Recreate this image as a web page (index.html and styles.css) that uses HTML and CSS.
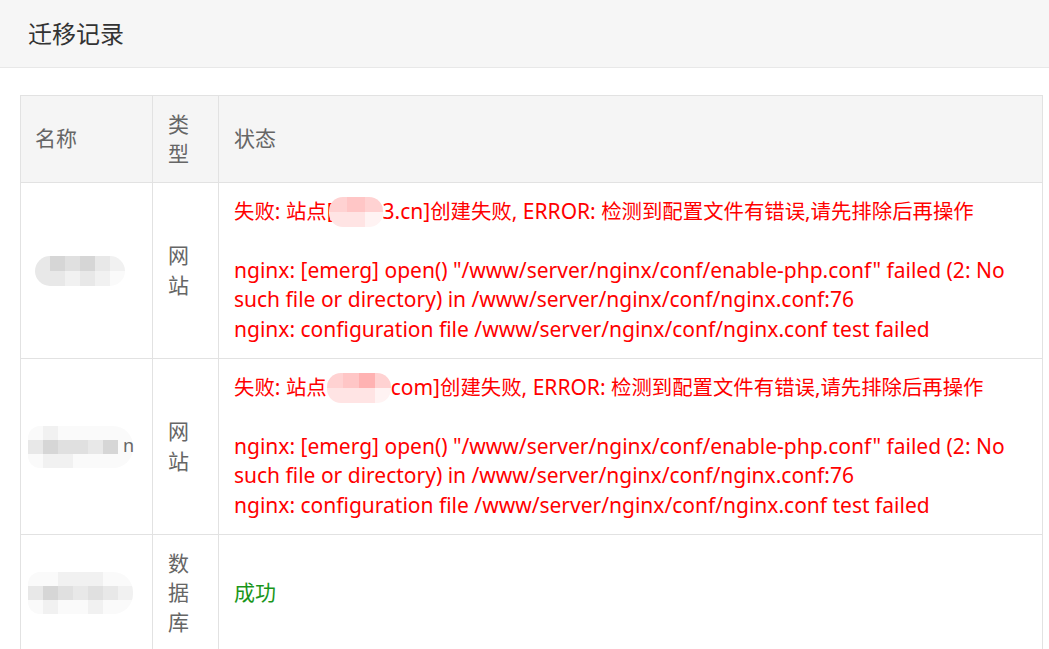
FILE: index.html
```html
<!DOCTYPE html>
<html lang="zh-CN">
<head>
<meta charset="utf-8">
<title>迁移记录</title>
<link rel="stylesheet" href="styles.css">
</head>
<body>
<header class="title-bar">迁移记录</header>
<main class="content">
  <table class="records">
    <colgroup>
      <col class="c-name">
      <col class="c-type">
      <col class="c-status">
    </colgroup>
    <thead>
      <tr><th>名称</th><th>类型</th><th>状态</th></tr>
    </thead>
    <tbody>
      <tr>
        <td class="name">
          <span class="mosaic m1">
            <i class="g2"></i><i class="g4"></i><i class="g3"></i><i class="g4"></i><i class="g2"></i><i class="g1"></i>
            <i class="g2"></i><i class="g2"></i><i class="g1"></i><i class="g2"></i><i class="g1"></i><i class="g0"></i>
          </span>
        </td>
        <td class="type">网站</td>
        <td class="status fail"><span class="zh">失败</span>: <span class="zh">站点</span>[<span class="pink p1"><i class="k2"></i><i class="k3"></i><i class="k2"></i><i class="k1"></i><i class="k1"></i><i class="k0"></i></span>3.cn]<span class="zh">创建失败</span>, ERROR: <span class="zh">检测到配置文件有错误,请先排除后再操作</span><br><br>nginx: [emerg] open() "/www/server/nginx/conf/enable-php.conf" failed (2: No such file or directory) in /www/server/nginx/conf/nginx.conf:76<br>nginx: configuration file /www/server/nginx/conf/nginx.conf test failed</td>
      </tr>
      <tr>
        <td class="name">
          <span class="mosaic m2">
            <i class="g0"></i><i class="g1"></i><i class="g0"></i><i class="g0"></i><i class="g0"></i><i class="g0"></i><i class="g0"></i>
            <i class="g2"></i><i class="g4"></i><i class="g3"></i><i class="g3"></i><i class="g2"></i><i class="g4"></i><i class="g0"></i>
            <i class="g0"></i><i class="g1"></i><i class="g1"></i><i class="g0"></i><i class="g0"></i><i class="g0"></i><i class="g0"></i>
          </span><span class="tail">n</span>
        </td>
        <td class="type">网站</td>
        <td class="status fail"><span class="zh">失败</span>: <span class="zh">站点</span><span class="pink p2"><i class="k2"></i><i class="k3"></i><i class="k4"></i><i class="k2"></i><i class="k1"></i><i class="k1"></i><i class="k1"></i><i class="k0"></i></span>com]<span class="zh">创建失败</span>, ERROR: <span class="zh">检测到配置文件有错误,请先排除后再操作</span><br><br>nginx: [emerg] open() "/www/server/nginx/conf/enable-php.conf" failed (2: No such file or directory) in /www/server/nginx/conf/nginx.conf:76<br>nginx: configuration file /www/server/nginx/conf/nginx.conf test failed</td>
      </tr>
      <tr>
        <td class="name">
          <span class="mosaic m3">
            <i class="g0"></i><i class="g0"></i><i class="g1"></i><i class="g1"></i><i class="g1"></i><i class="g0"></i><i class="g0"></i>
            <i class="g2"></i><i class="g4"></i><i class="g3"></i><i class="g2"></i><i class="g3"></i><i class="g2"></i><i class="g1"></i>
            <i class="g0"></i><i class="g1"></i><i class="g0"></i><i class="g0"></i><i class="g1"></i><i class="g0"></i><i class="g0"></i>
          </span>
        </td>
        <td class="type">数据库</td>
        <td class="status ok">成功</td>
      </tr>
    </tbody>
  </table>
</main>
</body>
</html>
```
FILE: styles.css
```css
html, body {
  margin: 0;
  padding: 0;
  background: #fff;
}
body {
  font-family: "Noto Sans", "Noto Sans CJK SC", sans-serif;
  font-size: 21px;
  color: #666;
}
.title-bar {
  height: 68px;
  box-sizing: border-box;
  background: #f6f6f6;
  border-bottom: 1px solid #e8e8e8;
  padding: 0 28px;
  line-height: 67px;
  font-size: 24px;
  color: #333;
}
.content {
  padding: 27px 6px 0 20px;
}
.records {
  width: 1023px;
  border-collapse: collapse;
  table-layout: fixed;
}
.c-name { width: 132px; }
.c-type { width: 66px; }
.records th,
.records td {
  border: 1px solid #e2e2e2;
  padding: 13.5px 15px;
  line-height: 29.6px;
  text-align: left;
  vertical-align: middle;
  font-weight: normal;
  word-break: break-all;
}
.records th {
  background: #f5f5f5;
  color: #666;
}
.records th:first-child { padding-left: 14px; }
.type { color: #666; }
.records td.fail { color: #ff0000; word-break: normal; }
.zh { font-size: 20.4px; }
.ok { color: #1a961a; }

.mosaic {
  display: inline-grid;
  grid-auto-rows: 15px;
  vertical-align: middle;
  overflow: hidden;
}
.mosaic i { display: block; }
.m1 {
  grid-template-columns: repeat(6, 15px);
  border-radius: 15px;
  margin-left: -1px;
}
.m2, .m3 {
  grid-template-columns: repeat(7, 15px);
  margin-left: -8px;
  border-radius: 12px 20px 20px 12px;
  grid-auto-rows: 14px;
}
.g0 { background: #fafafa; }
.g1 { background: #f1f1f1; }
.g2 { background: #e8e8e8; }
.g3 { background: #e0e0e0; }
.g4 { background: #d6d6d6; }
.tail {
  margin-left: -10px;
  color: #666;
  font-size: 18px;
}

.pink {
  display: inline-grid;
  grid-auto-rows: 15px;
  vertical-align: middle;
  margin: -6px 0 -4px;
  overflow: hidden;
  border-radius: 14px;
}
.pink i { display: block; }
.p1 {
  grid-template-columns: repeat(3, 18px);
  margin-left: -5px;
}
.p2 {
  grid-template-columns: repeat(4, 16px);
  margin-right: 0;
}
.k0 { background: #fff3f3; }
.k1 { background: #ffe4e4; }
.k2 { background: #ffd2d2; }
.k3 { background: #ffc6c6; }
.k4 { background: #ffb2b2; }
```
